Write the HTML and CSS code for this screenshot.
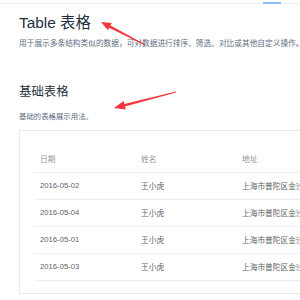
FILE: index.html
```html
<!DOCTYPE html>
<html lang="zh-CN">
	<head>
		<meta charset="utf-8">
		<title>Table 表格</title>
		<link rel="stylesheet" href="styles.css">
	</head>
	<body>

<div class="topbar"><span class="topbar-active"></span></div>

<div class="doc">
	<h2 class="doc-title">Table 表格</h2>
	<p class="doc-lead">用于展示多条结构类似的数据，可对数据进行排序、筛选、对比或其他自定义操作。</p>

	<h3 class="doc-section">基础表格</h3>
	<p class="doc-desc">基础的表格展示用法。</p>

	<div class="demo">
		<table class="table">
			<thead>
				<tr><th>日期</th><th>姓名</th><th>地址</th></tr>
			</thead>
			<tbody>
				<tr><td>2016-05-02</td><td>王小虎</td><td>上海市普陀区金沙江路 1518 弄</td></tr>
				<tr><td>2016-05-04</td><td>王小虎</td><td>上海市普陀区金沙江路 1517 弄</td></tr>
				<tr><td>2016-05-01</td><td>王小虎</td><td>上海市普陀区金沙江路 1519 弄</td></tr>
				<tr><td>2016-05-03</td><td>王小虎</td><td>上海市普陀区金沙江路 1516 弄</td></tr>
			</tbody>
		</table>
	</div>
</div>

<!-- red annotation arrows drawn over the page -->
<svg class="marks" width="300" height="300" viewBox="0 0 300 300">
	<polygon points="101,22 111.7,23.1 110.5,25.5 145.2,44.6 144.8,45.4 109.3,27.8 108,30.2" />
	<polygon points="114,108 123.5,100.9 124.3,103.9 175.9,91.6 176.1,92.4 125,106.6 125.8,109.6" />
</svg>

	</body>
</html>
```

FILE: styles.css
```css
* { box-sizing: border-box; }

html, body {
	height: 100%;
}

body {
	margin: 0;
	overflow: hidden;
	background: #fff;
	font-family: "Liberation Sans", "Noto Sans CJK SC", sans-serif;
	color: #1f2f3d;
}

.topbar {
	display: flex;
	justify-content: flex-end;
	height: 4px;
	padding-right: 19px;
	border-bottom: 1px solid #eef0f3;
}

.topbar-active {
	align-self: flex-end;
	width: 18px;
	height: 2px;
	margin-bottom: -1px;
	background: #8cc2fa;
}

.doc {
	padding-left: 19px;
}

.doc-title {
	margin: 9px 0 0;
	font-size: 15.4px;
	line-height: 20px;
	font-weight: normal;
	color: #1f2f3d;
}

.doc-lead {
	margin: 5px 0 0;
	font-size: 7.7px;
	line-height: 12px;
	color: #5e6d82;
	white-space: nowrap;
}

.doc-section {
	margin: 34px 0 0;
	font-size: 12.4px;
	line-height: 16px;
	font-weight: normal;
	color: #1f2f3d;
}

.doc-desc {
	margin: 11px 0 0;
	font-size: 7.4px;
	line-height: 12px;
	color: #5e6d82;
}

.demo {
	width: 400px;
	margin-top: 7px;
	padding: 14px 14px 12px;
	border: 1px solid #ebebeb;
}

.table {
	width: 380px;
	border-collapse: collapse;
	font-size: 7.7px;
	color: #606266;
	text-align: left;
}

.table th,
.table td {
	height: 27px;
	padding: 0 6px;
	border-bottom: 1px solid #ebeef5;
	white-space: nowrap;
}

.table th {
	width: 101px;
	font-weight: normal;
	color: #909399;
}

.table th:last-child {
	width: auto;
}

.marks {
	position: absolute;
	left: 0;
	top: 0;
	fill: #f3363b;
}
```
